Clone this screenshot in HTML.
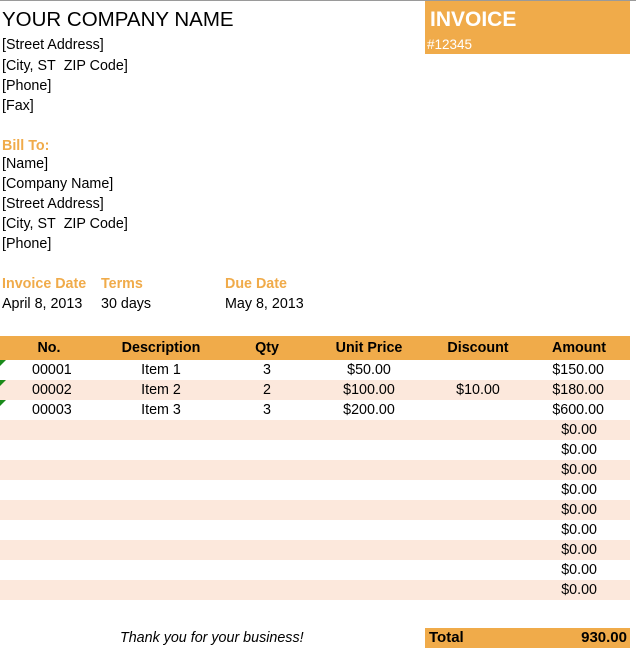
<!DOCTYPE html>
<html><head><style>
body{margin:0;width:636px;height:653px;position:relative;background:#fff;font-family:"Liberation Sans",sans-serif;font-size:14.3px;color:#000;overflow:hidden}
.t{position:absolute;white-space:nowrap;line-height:20px}
.o{color:#f0ab4a;font-weight:bold}
.row{position:absolute;left:0;width:630px;height:20px}
.pe{background:#fce8dc}
.c{position:absolute;line-height:21px;white-space:nowrap}
.tri{position:absolute;left:0;width:0;height:0;border-top:6px solid #1a8a1a;border-right:6px solid transparent}
</style></head><body>
<div style="position:absolute;left:0;top:0;width:636px;height:1px;background:#9a9a9a"></div>
<div class="t" style="left:2px;top:8px;font-size:20.5px;line-height:24px">YOUR COMPANY NAME</div>
<div class="t" style="left:2px;top:35px">[Street Address]</div>
<div class="t" style="left:2px;top:56px">[City, ST&nbsp; ZIP Code]</div>
<div class="t" style="left:2px;top:76px">[Phone]</div>
<div class="t" style="left:2px;top:96px">[Fax]</div>
<div class="t o" style="left:2px;top:136px">Bill To:</div>
<div class="t" style="left:2px;top:154px">[Name]</div>
<div class="t" style="left:2px;top:174px">[Company Name]</div>
<div class="t" style="left:2px;top:194px">[Street Address]</div>
<div class="t" style="left:2px;top:214px">[City, ST&nbsp; ZIP Code]</div>
<div class="t" style="left:2px;top:234px">[Phone]</div>
<div class="t o" style="left:2px;top:274px">Invoice Date</div>
<div class="t o" style="left:101px;top:274px">Terms</div>
<div class="t o" style="left:225px;top:274px">Due Date</div>
<div class="t" style="left:2px;top:294px">April 8, 2013</div>
<div class="t" style="left:101px;top:294px">30 days</div>
<div class="t" style="left:225px;top:294px">May 8, 2013</div>

<div style="position:absolute;left:425px;top:1px;width:205px;height:53px;background:#f0ab4a;color:#fff">
<div class="t" style="left:5px;top:7px;font-size:21px;font-weight:bold;line-height:24px">INVOICE</div>
<div class="t" style="left:2px;top:34px;font-size:13.5px">#12345</div>
</div>

<div class="row" style="top:336px;height:24px;background:#f0ab4a;font-weight:bold">
<div class="c" style="left:0;width:98px;text-align:center;line-height:25px">No.</div>
<div class="c" style="left:98px;width:126px;text-align:center;line-height:25px">Description</div>
<div class="c" style="left:224px;width:86px;text-align:center;line-height:25px">Qty</div>
<div class="c" style="left:310px;width:118px;text-align:center;line-height:25px">Unit Price</div>
<div class="c" style="left:428px;width:100px;text-align:center;line-height:25px">Discount</div>
<div class="c" style="left:528px;width:102px;text-align:center;line-height:25px">Amount</div>
</div>

<div class="row" style="top:360px"><div class="tri"></div><div class="c" style="left:32px">00001</div><div class="c" style="left:98px;width:126px;text-align:center">Item 1</div><div class="c" style="left:224px;width:86px;text-align:center">3</div><div class="c" style="left:310px;width:118px;text-align:center">$50.00</div><div class="c" style="right:26px">$150.00</div></div>
<div class="row pe" style="top:380px"><div class="tri"></div><div class="c" style="left:32px">00002</div><div class="c" style="left:98px;width:126px;text-align:center">Item 2</div><div class="c" style="left:224px;width:86px;text-align:center">2</div><div class="c" style="left:310px;width:118px;text-align:center">$100.00</div><div class="c" style="left:428px;width:100px;text-align:center">$10.00</div><div class="c" style="right:26px">$180.00</div></div>
<div class="row" style="top:400px"><div class="tri"></div><div class="c" style="left:32px">00003</div><div class="c" style="left:98px;width:126px;text-align:center">Item 3</div><div class="c" style="left:224px;width:86px;text-align:center">3</div><div class="c" style="left:310px;width:118px;text-align:center">$200.00</div><div class="c" style="right:26px">$600.00</div></div>
<div class="row pe" style="top:420px"><div class="c" style="right:33px">$0.00</div></div>
<div class="row" style="top:440px"><div class="c" style="right:33px">$0.00</div></div>
<div class="row pe" style="top:460px"><div class="c" style="right:33px">$0.00</div></div>
<div class="row" style="top:480px"><div class="c" style="right:33px">$0.00</div></div>
<div class="row pe" style="top:500px"><div class="c" style="right:33px">$0.00</div></div>
<div class="row" style="top:520px"><div class="c" style="right:33px">$0.00</div></div>
<div class="row pe" style="top:540px"><div class="c" style="right:33px">$0.00</div></div>
<div class="row" style="top:560px"><div class="c" style="right:33px">$0.00</div></div>
<div class="row pe" style="top:580px"><div class="c" style="right:33px">$0.00</div></div>

<div class="t" style="left:120px;top:628px;font-style:italic">Thank you for your business!</div>
<div style="position:absolute;left:425px;top:628px;width:205px;height:20px;background:#f0ab4a;font-weight:bold;font-size:15px">
<div class="c" style="left:4px;line-height:19px">Total</div><div class="c" style="right:3px;line-height:19px">930.00</div>
</div>
</body></html>
